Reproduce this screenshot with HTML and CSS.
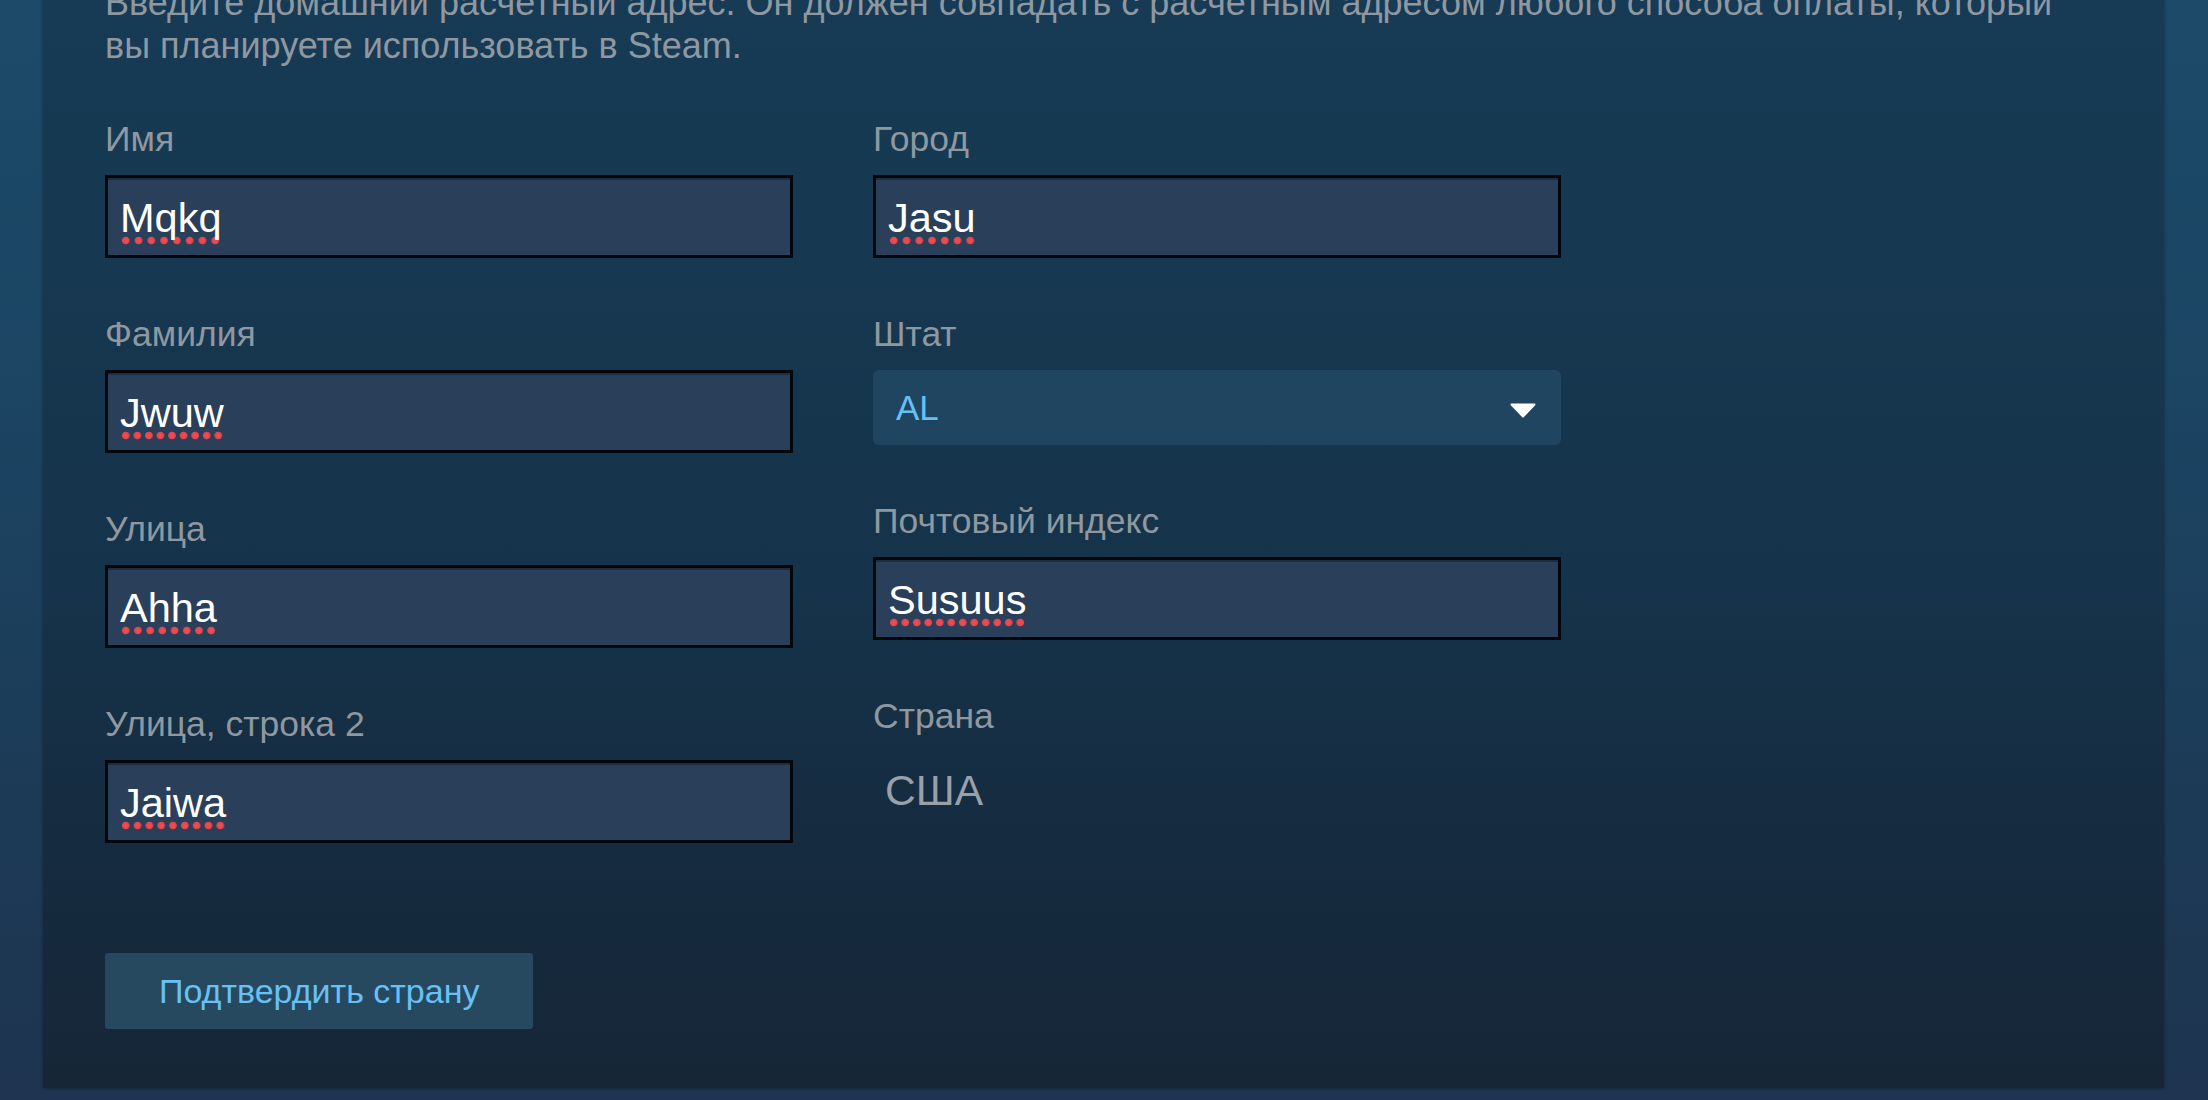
FILE: index.html
```html
<!DOCTYPE html>
<html lang="ru">
<head>
<meta charset="utf-8">
<title>Адрес</title>
<link rel="stylesheet" href="styles.css">
</head>
<body>
<div class="page">
  <main class="panel">
    <p class="intro">Введите домашний расчетный адрес. Он должен совпадать с расчетным адресом любого способа оплаты, который<br>вы планируете использовать в Steam.</p>
    <div class="form">
      <div class="col">
        <div class="field">
          <div class="label">Имя</div>
          <div class="input"><span class="typo">Mqkq</span></div>
        </div>
        <div class="field">
          <div class="label">Фамилия</div>
          <div class="input"><span class="typo">Jwuw</span></div>
        </div>
        <div class="field">
          <div class="label">Улица</div>
          <div class="input"><span class="typo">Ahha</span></div>
        </div>
        <div class="field">
          <div class="label">Улица, строка 2</div>
          <div class="input"><span class="typo">Jaiwa</span></div>
        </div>
      </div>
      <div class="col">
        <div class="field">
          <div class="label">Город</div>
          <div class="input"><span class="typo">Jasu</span></div>
        </div>
        <div class="field">
          <div class="label">Штат</div>
          <div class="select">
            <span class="select-value">AL</span>
            <svg class="select-arrow" width="26" height="15" viewBox="0 0 26 15" aria-hidden="true"><path d="M1.5 1.5 H24.5 L13 13.5 Z" fill="#ffffff" stroke="#ffffff" stroke-width="2" stroke-linejoin="round"/></svg>
          </div>
        </div>
        <div class="field">
          <div class="label">Почтовый индекс</div>
          <div class="input"><span class="typo">Susuus</span></div>
        </div>
        <div class="field">
          <div class="label">Страна</div>
          <div class="static">США</div>
        </div>
      </div>
    </div>
    <button class="btn" type="button">Подтвердить страну</button>
  </main>
</div>
</body>
</html>
```
FILE: styles.css
```css
html, body {
  margin: 0;
  padding: 0;
  height: 100%;
}

body {
  background: linear-gradient(180deg, #1c4a69 0%, #1b4563 35%, #1c3b57 70%, #1e3450 100%);
  font-family: "Liberation Sans", Arial, Helvetica, sans-serif;
  overflow: hidden;
}

.page {
  padding: 0 44px 0 43px;
}

.panel {
  display: flex;
  flex-direction: column;
  box-sizing: border-box;
  height: 1088px;
  padding: 0 62px 59px;
  overflow: hidden;
  background: linear-gradient(180deg, #173b55 0%, #16374f 30%, #15334a 55%, #152b3f 78%, #162637 100%);
  box-shadow: 0 0 3px rgba(0, 0, 0, 0.35);
}

.intro {
  margin: -19px 0 51px;
  font-size: 36px;
  line-height: 43px;
  color: #8f98a0;
}

.form {
  display: grid;
  grid-template-columns: 688px 688px;
  column-gap: 80px;
  align-items: start;
}

.col {
  display: flex;
  flex-direction: column;
  gap: 55px;
}

.field {
  display: flex;
  flex-direction: column;
}

.label {
  font-size: 35.5px;
  line-height: 42px;
  color: #8f98a0;
  margin-bottom: 15px;
}

.input {
  box-sizing: border-box;
  height: 83px;
  display: flex;
  align-items: center;
  padding: 5px 12px 0;
  border: 3px solid #03070c;
  background: #2a3f5a;
  box-shadow: inset 0 2px 0 rgba(0, 0, 0, 0.3);
  color: #ffffff;
  font-size: 41.5px;
}

.typo {
  padding-bottom: 3px;
  background-image: radial-gradient(circle at center, #ef5055 0, #e4444a 3.4px, rgba(228, 68, 74, 0) 4.2px);
  background-size: 11.5px 9px;
  background-repeat: space no-repeat;
  background-position: 0 100%;
}

.select {
  box-sizing: border-box;
  height: 75px;
  display: flex;
  align-items: center;
  justify-content: space-between;
  padding: 0 25px 0 23px;
  border-radius: 6px;
  background: #1f4560;
  color: #66c0f4;
  font-size: 35px;
}

.select-arrow {
  display: block;
  margin-top: 6px;
}

.static {
  box-sizing: border-box;
  height: 83px;
  display: flex;
  align-items: center;
  padding: 0 12px 5px;
  color: #98a1a9;
  font-size: 42.5px;
}

.btn {
  align-self: flex-start;
  margin-top: 110px;
  height: 76px;
  padding: 0 54px;
  border: none;
  border-radius: 3px;
  background: #274960;
  color: #67c1f5;
  font-family: "Liberation Sans", Arial, Helvetica, sans-serif;
  font-size: 34px;
  cursor: pointer;
}
```
